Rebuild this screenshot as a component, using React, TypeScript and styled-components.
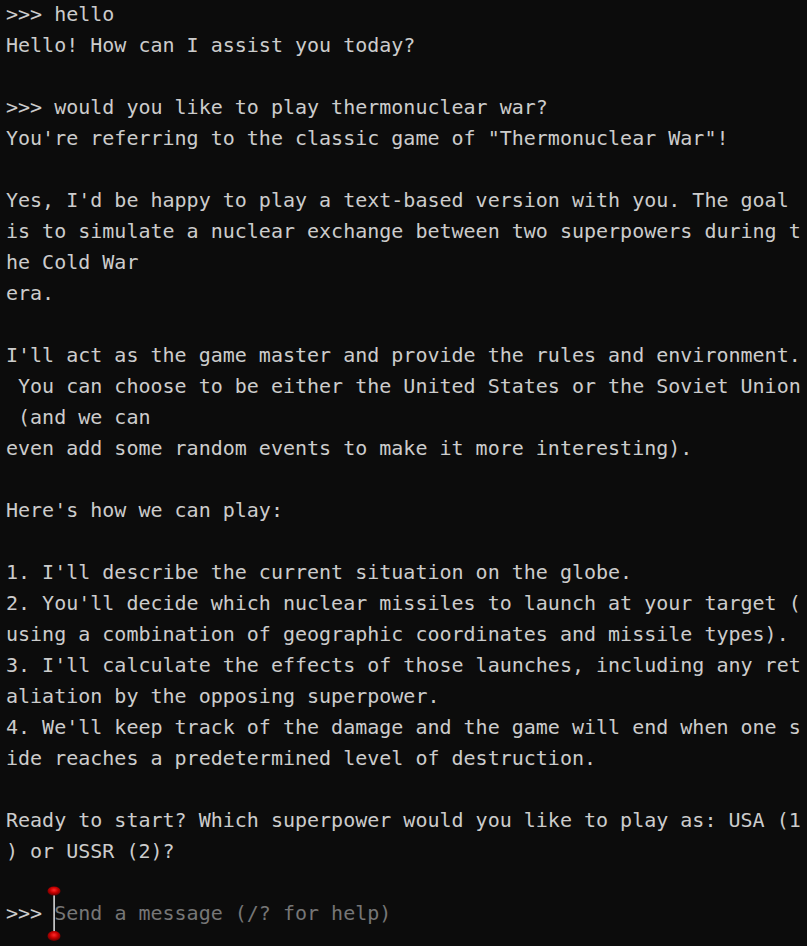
import React from "react";
import styled, { createGlobalStyle } from "styled-components";

const Global = createGlobalStyle`
  html, body {
    margin: 0;
    padding: 0;
    background: #0c0c0c;
  }
  body {
    overflow: hidden;
  }
`;

const Terminal = styled.div`
  box-sizing: border-box;
  width: 807px;
  height: 946px;
  background: #0c0c0c;
  color: #cccccc;
  font-family: "DejaVu Sans Mono", "Liberation Mono", monospace;
  font-size: 20px;
  line-height: 31px;
  padding: 0 0 0 6px;
  margin-top: -1px;
`;

const Line = styled.div`
  white-space: pre;
  height: 31px;
`;

const InputLine = styled.div`
  display: flex;
  white-space: pre;
  height: 31px;
`;

const InputArea = styled.span`
  position: relative;
  display: inline-block;
  height: 31px;
  color: #767676;
`;

const Cursor = styled.svg`
  position: absolute;
  left: -8px;
  top: -13px;
  pointer-events: none;
`;

const lines: string[] = [
  ">>> hello",
  "Hello! How can I assist you today?",
  "",
  ">>> would you like to play thermonuclear war?",
  'You\'re referring to the classic game of "Thermonuclear War"!',
  "",
  "Yes, I'd be happy to play a text-based version with you. The goal",
  "is to simulate a nuclear exchange between two superpowers during t",
  "he Cold War",
  "era.",
  "",
  "I'll act as the game master and provide the rules and environment.",
  " You can choose to be either the United States or the Soviet Union",
  " (and we can",
  "even add some random events to make it more interesting).",
  "",
  "Here's how we can play:",
  "",
  "1. I'll describe the current situation on the globe.",
  "2. You'll decide which nuclear missiles to launch at your target (",
  "using a combination of geographic coordinates and missile types).",
  "3. I'll calculate the effects of those launches, including any ret",
  "aliation by the opposing superpower.",
  "4. We'll keep track of the damage and the game will end when one s",
  "ide reaches a predetermined level of destruction.",
  "",
  "Ready to start? Which superpower would you like to play as: USA (1",
  ") or USSR (2)?",
  "",
];

export default function App() {
  return (
    <>
      <Global />
      <Terminal>
        {lines.map((l, i) => (
          <Line key={i}>{l}</Line>
        ))}
        <InputLine>
          <span>{">>> "}</span>
          <InputArea>
            Send a message (/? for help)
            <Cursor width="16" height="58" viewBox="0 0 16 58">
              <defs>
                <radialGradient id="blob" cx="50%" cy="40%" r="60%">
                  <stop offset="0%" stopColor="#ff2a2a" />
                  <stop offset="50%" stopColor="#c80000" />
                  <stop offset="100%" stopColor="#600000" />
                </radialGradient>
              </defs>
              <rect x="7.4" y="9" width="1.4" height="38" fill="#f2f2f2" />
              <ellipse cx="8" cy="6" rx="6.5" ry="4.5" fill="url(#blob)" />
              <ellipse cx="8" cy="51" rx="6.5" ry="5" fill="url(#blob)" />
            </Cursor>
          </InputArea>
        </InputLine>
      </Terminal>
    </>
  );
}
